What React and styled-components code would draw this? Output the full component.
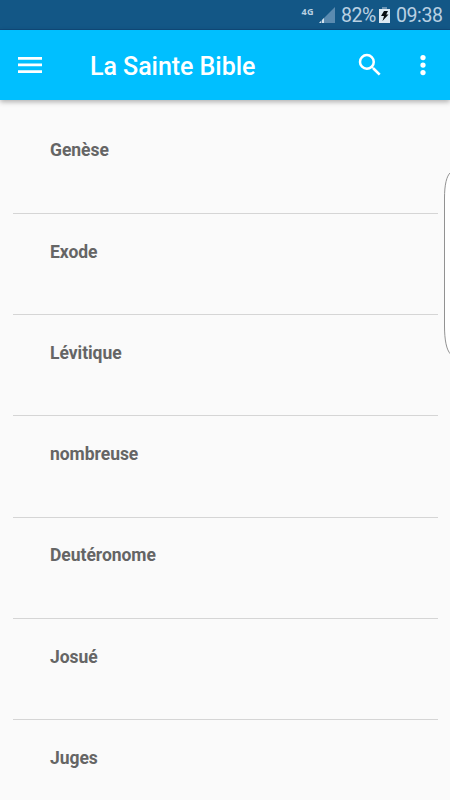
import React from "react";
import styled, { createGlobalStyle } from "styled-components";

const GlobalStyle = createGlobalStyle`
  * { box-sizing: border-box; }
  body { margin: 0; background: #fafafa; overflow: hidden; font-family: Roboto, sans-serif; }
`;

const Screen = styled.div`
  position: relative;
  width: 450px;
  height: 800px;
  overflow: hidden;
  background: #fafafa;
`;

const StatusBar = styled.header`
  display: flex;
  justify-content: flex-end;
  height: 30px;
  padding-right: 7px;
  background: #135786;
  border-bottom: 1px solid #104a7c;
  color: #b9d0e2;
`;

const NetworkLabel = styled.span`
  margin: 6px 5px 0 0;
  font: 700 9px/12px "Noto Sans", sans-serif;
  letter-spacing: 0.4px;
`;

const SignalIcon = styled.svg`
  width: 16px;
  height: 16px;
  margin: 7px 6px 0 0;
`;

const StatusText = styled.span`
  width: ${(p) => p.$width}px;
  margin-top: 5px;
  font-size: 19.5px;
  line-height: 22px;
  letter-spacing: -0.4px;
  white-space: nowrap;
`;

const BatteryIcon = styled.svg`
  width: 11px;
  height: 16px;
  margin: 7px 6px 0 3px;
`;

const AppBar = styled.nav`
  position: relative;
  display: flex;
  align-items: center;
  height: 70px;
  padding: 0 12.5px 0 18px;
  background: #00bfff;
  color: #fff;
  box-shadow: 0 2px 5px rgba(0, 0, 0, 0.3);
`;

const IconButton = styled.button`
  display: flex;
  flex: none;
  padding: 0;
  margin-left: ${(p) => p.$gap || 0}px;
  border: 0;
  background: none;
  color: inherit;
`;

const Title = styled.h1`
  flex: 1;
  margin: 3px 0 0 48px;
  font-size: 25px;
  font-weight: 500;
  line-height: 30px;
  letter-spacing: -0.04px;
`;

const BookList = styled.ul`
  margin: 0;
  padding: 12.5px 12.5px 0;
  list-style: none;
`;

const Book = styled.li`
  height: 101.25px;
  padding: 27.75px 0 0 37.5px;
  border-bottom: 1px solid #d5d5d5;
  color: #656565;
  font-size: 17.5px;
  font-weight: 700;
  line-height: 21px;
  letter-spacing: -0.04px;
`;

const EdgeHandle = styled.svg`
  position: absolute;
  top: 168px;
  right: 0;
  width: 8px;
  height: 190px;
`;

const books = ["Genèse", "Exode", "Lévitique", "nombreuse", "Deutéronome", "Josué", "Juges"];

export default function App() {
  return (
    <Screen>
      <GlobalStyle />
      <StatusBar>
        <NetworkLabel>4G</NetworkLabel>
        <SignalIcon viewBox="0 0 16 16">
          <path d="M16 0V16H0Z" fill="#5b8bb0" />
          <path d="M2 14V16H0ZM5 11V16H3V13Z" fill="#d1e1ed" />
        </SignalIcon>
        <StatusText $width={35}>82%</StatusText>
        <BatteryIcon viewBox="0 0 11 16">
          <path d="M3 0h5v2H3z" fill="#6b94b4" />
          <path d="M0 2h11v14H0z" fill="#dce8f1" />
          <path d="M5 4h4L7.2 7.5H9.5L3.5 14 5 9H2Z" fill="#080c10" />
        </BatteryIcon>
        <StatusText $width={47}>09:38</StatusText>
      </StatusBar>
      <AppBar>
        <IconButton aria-label="Menu">
          <svg width="24" height="16" viewBox="0 0 24 16">
            <path d="M0 0h24v2.7H0zM0 6.5h24v2.7H0zM0 13.2h24v2.7H0z" fill="currentColor" />
          </svg>
        </IconButton>
        <Title>La Sainte Bible</Title>
        <IconButton aria-label="Search">
          <svg width="30" height="30" viewBox="0 0 24 24" fill="currentColor">
            <path d="M15.5 14h-.79l-.28-.27A6.47 6.47 0 0 0 16 9.5 6.5 6.5 0 1 0 9.5 16c1.61 0 3.09-.59 4.23-1.57l.27.28v.79l5 4.99L20.49 19zm-6 0a4.5 4.5 0 1 1 0-9 4.5 4.5 0 0 1 0 9z" />
          </svg>
        </IconButton>
        <IconButton aria-label="More options" $gap={22.5}>
          <svg width="30" height="30" viewBox="0 0 24 24" fill="currentColor">
            <circle cx="12" cy="6" r="2.1" />
            <circle cx="12" cy="12" r="2.1" />
            <circle cx="12" cy="18" r="2.1" />
          </svg>
        </IconButton>
      </AppBar>
      <BookList>
        {books.map((name) => (
          <Book key={name}>{name}</Book>
        ))}
      </BookList>
      <EdgeHandle viewBox="0 0 8 190">
        <path d="M8.5 4.5C4.5 8 2.5 17 2.5 30V158C2.5 172 4.5 182 8.5 186" fill="#fff" stroke="#929292" />
      </EdgeHandle>
    </Screen>
  );
}
